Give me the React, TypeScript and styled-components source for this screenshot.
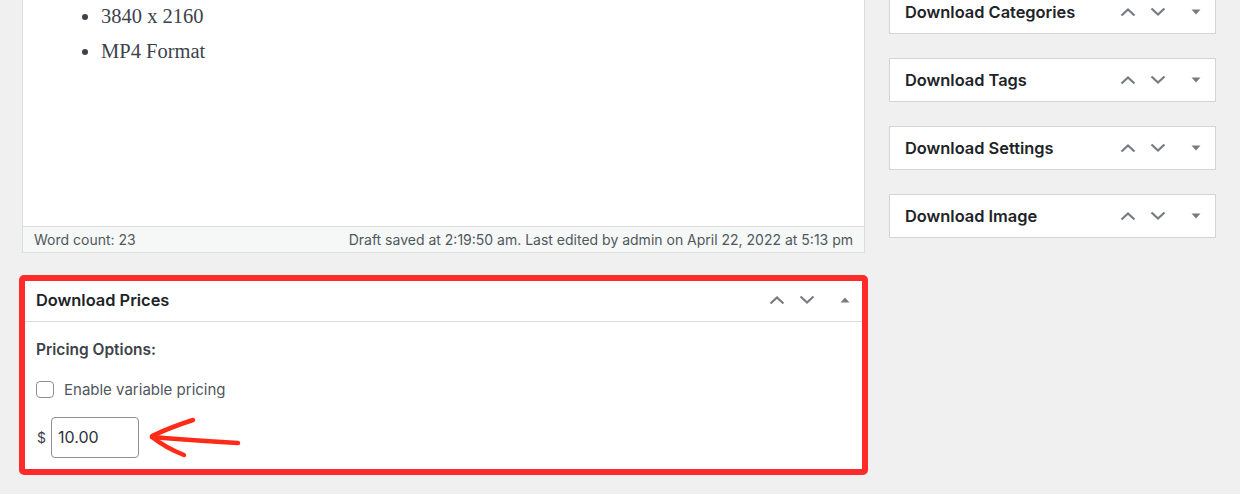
import React from 'react';
import styled, {createGlobalStyle} from "styled-components";

const GlobalStyle = createGlobalStyle`
  html, body {
    margin: 0;
    padding: 0;
    background: #f0f0f1;
    height: 100%;
    overflow: hidden;
  }
  body {
    font-family: Inter, "Liberation Sans", Arial, sans-serif;
    color: #1d2327;
  }
`

const sidebarBoxes = ["Download Categories", "Download Tags", "Download Settings", "Download Image"];

const ChevronUp = () => (
    <svg width="16" height="10" viewBox="0 0 16 10">
        <path d="M1.5 8.5 L8 2.5 L14.5 8.5" fill="none" stroke="#787c82" strokeWidth="2.2"/>
    </svg>
);

const ChevronDown = () => (
    <svg width="16" height="10" viewBox="0 0 16 10">
        <path d="M1.5 1.5 L8 7.5 L14.5 1.5" fill="none" stroke="#787c82" strokeWidth="2.2"/>
    </svg>
);

const Triangle = ({up}: { up?: boolean }) => (
    <svg width="10" height="6" viewBox="0 0 10 6">
        <path d={up ? "M0.5 5.5 L5 0.5 L9.5 5.5 Z" : "M0.5 0.5 L5 5.5 L9.5 0.5 Z"} fill="#787c82"/>
    </svg>
);

const Handles = ({open}: { open?: boolean }) => (
    <HandleGroup>
        <OrderBtn><ChevronUp/></OrderBtn>
        <OrderBtn><ChevronDown/></OrderBtn>
        <ToggleBtn><Triangle up={open}/></ToggleBtn>
    </HandleGroup>
);

const Arrow = () => (
    <ArrowSvg width="96" height="44" viewBox="0 0 96 44">
        <g fill="none" stroke="#ff2a18" strokeWidth="4.5" strokeLinecap="round" strokeLinejoin="round">
            <path d="M46 4 Q 24 11 5 20"/>
            <path d="M5 21 Q 40 24 91 27"/>
            <path d="M5 21 Q 19 32 37 39"/>
        </g>
    </ArrowSvg>
);

export default function App() {
    return (<>
            <GlobalStyle/>
            <Page>
                <MainColumn>
                    <Editor>
                        <EditorContent>
                            <List>
                                <li>3840 x 2160</li>
                                <li>MP4 Format</li>
                            </List>
                        </EditorContent>
                        <StatusBar>
                            <span>Word count: 23</span>
                            <span>Draft saved at 2:19:50 am. Last edited by admin on April 22, 2022 at 5:13 pm</span>
                        </StatusBar>
                    </Editor>

                    <PricesBox>
                        <BoxHeader>
                            <BoxTitle>Download Prices</BoxTitle>
                            <Handles open/>
                        </BoxHeader>
                        <BoxBody>
                            <FieldLabel>Pricing Options:</FieldLabel>
                            <CheckRow>
                                <Checkbox type="checkbox"/>
                                Enable variable pricing
                            </CheckRow>
                            <PriceRow>
                                <span>$</span>
                                <PriceInput defaultValue="10.00"/>
                                <Arrow/>
                            </PriceRow>
                        </BoxBody>
                    </PricesBox>
                </MainColumn>

                <Sidebar>
                    {sidebarBoxes.map(title => (
                        <SideBox key={title}>
                            <BoxTitle>{title}</BoxTitle>
                            <Handles/>
                        </SideBox>
                    ))}
                </Sidebar>
            </Page>
        </>
    );
}

const Page = styled.div`
  display: flex;
  gap: 24px;
  padding: 0 24px 0 22px;
  margin-top: -10px;
`

const MainColumn = styled.div`
  width: 843px;
  display: flex;
  flex-direction: column;
`

const Editor = styled.div`
  display: flex;
  flex-direction: column;
`

const EditorContent = styled.div`
  height: 236px;
  box-sizing: border-box;
  background: #fff;
  border: 1px solid #dcdcde;
  border-bottom: none;
  padding-top: 12px;
`

const List = styled.ul`
  margin: 0;
  padding-left: 78px;
  font-family: "Liberation Serif", "Times New Roman", serif;
  font-size: 20.5px;
  color: #3c434a;

  li {
    line-height: 27px;
    margin-bottom: 8px;
  }
`

const StatusBar = styled.div`
  height: 27px;
  box-sizing: border-box;
  display: flex;
  align-items: center;
  justify-content: space-between;
  padding: 0 11px;
  background: #f6f7f7;
  border: 1px solid #dcdcde;
  font-size: 14px;
  color: #50575e;
`

const PricesBox = styled.div`
  margin-top: 25px;
  height: 194px;
  box-sizing: border-box;
  background: #fff;
  border: 1px solid #c3c4c7;
  border-radius: 2px;
  outline: 6px solid #ff2b2b;
  outline-offset: -3px;
`

const BoxHeader = styled.div`
  height: 42px;
  display: flex;
  align-items: center;
  justify-content: space-between;
  padding-left: 13px;
  border-bottom: 1px solid #dcdcde;
`

const BoxTitle = styled.h2`
  margin: 0;
  font-size: 16.4px;
  font-weight: 600;
  color: #1d2327;
`

const HandleGroup = styled.div`
  display: flex;
  align-items: center;
  height: 100%;
`

const OrderBtn = styled.span`
  width: 30px;
  height: 100%;
  display: flex;
  align-items: center;
  justify-content: center;
`

const ToggleBtn = styled(OrderBtn)`
  width: 38px;
  margin-left: 4px;
`

const BoxBody = styled.div`
  padding: 18px 13px 0;
  display: flex;
  flex-direction: column;
`

const FieldLabel = styled.div`
  font-size: 15.5px;
  font-weight: 600;
  line-height: 20px;
  color: #3c434a;
`

const CheckRow = styled.label`
  margin-top: 19px;
  display: flex;
  align-items: center;
  gap: 10px;
  height: 21px;
  font-size: 15px;
  color: #50575e;
`

const Checkbox = styled.input`
  appearance: none;
  margin: 0;
  width: 18px;
  height: 17px;
  border: 1px solid #8c8f94;
  border-radius: 4px;
  background: #fff;
`

const PriceRow = styled.div`
  margin-top: 14px;
  display: flex;
  align-items: center;
  font-size: 14px;
  color: #3c434a;
  padding-left: 1px;
`

const PriceInput = styled.input`
  margin-left: 5px;
  width: 88px;
  height: 41px;
  box-sizing: border-box;
  padding: 0 6px;
  border: 1px solid #8c8f94;
  border-radius: 4px;
  font-family: Inter, "Liberation Sans", Arial, sans-serif;
  font-size: 16px;
  color: #2c3338;
  outline: none;
`

const ArrowSvg = styled.svg`
  margin-left: 8px;
  margin-top: 2px;
`

const Sidebar = styled.div`
  width: 327px;
  display: flex;
  flex-direction: column;
  gap: 24px;
`

const SideBox = styled.div`
  height: 44px;
  box-sizing: border-box;
  display: flex;
  align-items: center;
  justify-content: space-between;
  padding-left: 15px;
  background: #fff;
  border: 1px solid #d3d4d6;
`
